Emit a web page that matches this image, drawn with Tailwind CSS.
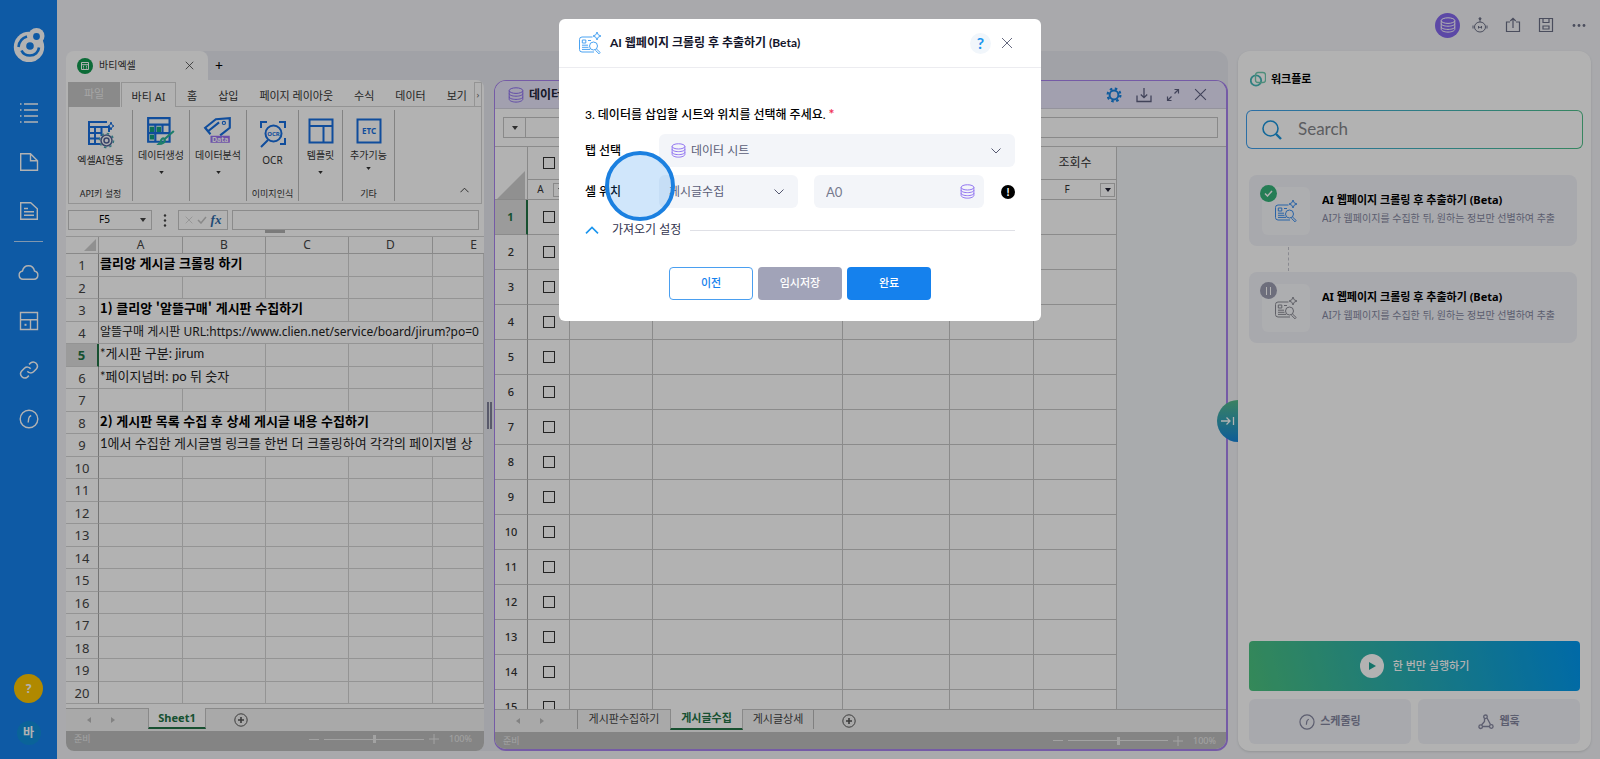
<!DOCTYPE html>
<html lang="ko">
<head>
    <meta charset="UTF-8">
    <meta name="viewport" content="width=device-width, initial-scale=1.0">
    <title>AI 웹페이지 크롤링</title>
    <script src="https://cdn.jsdelivr.net/npm/@tailwindcss/browser@4"></script>
</head>
<body class="h-screen overflow-hidden flex bg-[#f2f3f7] text-xs text-[#333] font-['Noto_Sans','Noto_Sans_CJK_KR',sans-serif]">

    <!-- shared icons -->
    <svg class="hidden">
        <symbol id="db" viewBox="0 0 16 16" fill="none" stroke="currentColor">
            <ellipse cx="8" cy="3.6" rx="6.8" ry="2.8"/>
            <path d="M1.200 3.600v8.600c0 1.500 3 2.900 6.800 2.900s6.800-1.400 6.800-2.900V3.600M1.200 6.600c0 1.500 3 2.600 6.800 2.600s6.800-1.100 6.800-2.600M1.200 9.800c0 1.500 3 2.600 6.800 2.600s6.800-1.100 6.800-2.600"/>
        </symbol>
        <symbol id="crawl" viewBox="0 0 24 24" fill="none" stroke="currentColor">
            <path d="M14.500 6H4a2.500 2.500 0 0 0-2.500 2.500v10A2.500 2.500 0 0 0 4 21h12M4.300 9h3.500v3H4.300zM10 9.500h3M4 14.200h6M4 16.300h6.500M4 18.400h8M19 1l1.200 2.800L23 5l-2.800 1.200L19 9l-1.200-2.800L15 5l2.800-1.200zM18.500 18l3.700 3.500-1.200 1.300-3.700-3.600"/>
            <circle cx="15.500" cy="15" r="4"/>
        </symbol>
        <symbol id="clock" viewBox="0 0 20 20" fill="none" stroke="currentColor">
            <circle cx="10" cy="10" r="8.800"/>
            <path d="M12.200 6.500c-1.500.7-2.300 1.700-2.500 3l-.5 4"/>
        </symbol>
        <symbol id="down" viewBox="0 0 10 6" fill="none" stroke="currentColor">
            <path d="M.5.5 5 5 9.500.5"/>
        </symbol>
        <symbol id="caret" viewBox="0 0 6 4">
            <path d="M0 0h6L3 4z" fill="currentColor"/>
        </symbol>
        <symbol id="close" viewBox="0 0 12 12" fill="none" stroke="currentColor">
            <path d="m1 1 10 10M11 1 1 11"/>
        </symbol>
        <symbol id="plus" viewBox="0 0 14 14" fill="none" stroke="currentColor">
            <circle cx="7" cy="7" r="6.200"/><path d="M7 4v6M4 7h6" stroke-width="1.600"/>
        </symbol>
    </svg>

    <!-- side menu -->
    <nav class="w-[57px] shrink-0 bg-[#1581ed] text-white flex flex-col items-center pt-7">
        <a href="#" aria-label="홈">
            <svg class="w-8 h-[34px]" viewBox="0 0 32 34" fill="none">
                <circle cx="16" cy="19" r="15.200" fill="currentColor"/>
                <circle cx="23.500" cy="8" r="8" fill="currentColor"/>
                <circle cx="23.500" cy="8.500" r="3.400" fill="#1581ed"/>
                <circle cx="17" cy="18" r="3.800" fill="#1581ed"/>
                <path d="M5.500 19c.5-5 3.500-9 8.500-10.500" stroke="#1581ed" stroke-width="2.600"/>
                <path d="M8.500 22.500c1.500 3.500 4.500 5 8.500 5 5 0 8.500-3.500 9-8" stroke="#1581ed" stroke-width="2.600"/>
            </svg>
        </a>
        <div class="flex flex-col items-center gap-[29px] mt-[41px]">
            <a href="#" aria-label="목록"><svg class="w-5 h-5" viewBox="0 0 20 20" stroke="currentColor" stroke-width="1.400"><path d="M5 1h14M5 7h14M5 13h14M5 19h14M1 1h1.500M1 7h1.500M1 13h1.500M1 19h1.500"/></svg></a>
            <a href="#" aria-label="페이지"><svg class="w-5 h-5" viewBox="0 0 20 20" fill="none" stroke="currentColor" stroke-width="1.400"><path d="M1.700 1.700h9.800l7 7v9.600H1.700zM11.500 1.700v7h7"/></svg></a>
            <a href="#" aria-label="문서"><svg class="w-5 h-5" viewBox="0 0 20 20" fill="none" stroke="currentColor" stroke-width="1.400"><path d="M1.700 1.700h10l6.600 6v10.600H1.700zM5 7.500h4M5 10.800h10M5 14.200h10"/></svg></a>
        </div>
        <div class="w-[29px] h-px bg-white/70 my-5"></div>
        <div class="flex flex-col items-center gap-[29px]">
            <a href="#" aria-label="클라우드"><svg class="w-[21px] h-5" viewBox="0 0 21 20" fill="none" stroke="currentColor" stroke-width="1.400"><path d="M5 17.300a4.200 4.200 0 0 1-.5-8.300c.7-3.500 3-5.300 6-5.300s5.300 1.800 6 5.300a4.200 4.200 0 0 1-.5 8.300z"/></svg></a>
            <a href="#" aria-label="템플릿"><svg class="w-5 h-5" viewBox="0 0 20 20" fill="none" stroke="currentColor" stroke-width="1.400"><path d="M1.500 1.500h17v17h-17zM1.500 8.800h17M11.500 8.800v9.700"/><path d="M5.500 13.800h2" stroke-width="2"/></svg></a>
            <a href="#" aria-label="링크"><svg class="w-5 h-5" viewBox="0 0 24 24" fill="none" stroke="currentColor" stroke-width="1.800"><path d="M10 13.500a5 5 0 0 0 7.500.5l3.500-3.500a5 5 0 0 0-7-7L12 5.200M14 10.500a5 5 0 0 0-7.500-.5L3 13.500a5 5 0 0 0 7 7l1.800-1.700"/></svg></a>
            <a href="#" aria-label="예약"><svg class="w-5 h-5" stroke-width="1.400"><use href="#clock"/></svg></a>
        </div>
        <button class="mt-auto w-[29px] h-[29px] rounded-full bg-[#fcc500] font-bold">?</button>
        <button class="mt-[18px] mb-[14px] w-6 h-6 rounded-full bg-[#0f8fdc] font-bold">바</button>
    </nav>

    <div class="flex-1 min-w-0 flex flex-col px-[9px] pb-2">
        <header class="h-[50px] mb-px shrink-0 flex items-center justify-end gap-3 pr-1 text-[#6b6f86]">
            <button aria-label="데이터 시트" class="w-[25px] h-[25px] rounded-full bg-[#8567ee] text-white flex items-center justify-center"><svg class="w-4 h-4"><use href="#db"/></svg></button>
            <button aria-label="로봇"><svg class="w-4 h-4" viewBox="0 0 16 16" fill="none" stroke="currentColor"><ellipse cx="8" cy="10" rx="5.500" ry="5"/><path d="M8 5V2M6.500 9v2.500M9.500 9v2.500M1 8.500v3M15 8.500v3M6.500 10.300h3"/><circle cx="8" cy="1.700" r="1" fill="currentColor"/></svg></button>
            <button aria-label="내보내기" class="ml-[5px]"><svg class="w-4 h-4" viewBox="0 0 16 16" fill="none" stroke="currentColor" stroke-width="1.200"><path d="M5 5H1.500v9.500h13V5H11M8 11V1.500M5.300 4 8 1.300 10.700 4"/></svg></button>
            <button aria-label="저장" class="ml-[5px]"><svg class="w-4 h-4" viewBox="0 0 16 16" fill="none" stroke="currentColor" stroke-width="1.200"><path d="M1.500 1.500h13v13h-13zM5 1.500v4h6v-4M5 9h6v3H5z"/></svg></button>
            <button aria-label="더보기" class="ml-[5px]"><svg class="w-4 h-4" viewBox="0 0 16 16" fill="currentColor"><circle cx="3" cy="8.500" r="1.400"/><circle cx="8" cy="8.500" r="1.400"/><circle cx="13" cy="8.500" r="1.400"/></svg></button>
        </header>

        <div class="flex-1 min-h-0 flex gap-[10px]">
            <!-- work area -->
            <div class="flex-1 min-w-0 flex rounded-xl bg-[#e7e9f0]">

                <!-- excel -->
                <section class="w-[418px] shrink-0 min-h-0 flex flex-col">
                    <div class="h-[29px] shrink-0 flex items-center">
                        <div class="w-[142px] h-full bg-white rounded-t-lg flex items-center pl-[11px] pr-[14px] text-[10px]">
                            <svg class="w-4 h-4" viewBox="0 0 16 16"><circle cx="8" cy="8" r="8" fill="#129a50"/><path d="M4.500 4.500h7v7h-7zM4.500 6.700h7M6 8.300h1M9 8.300h1M6 10h1M9 10h1" stroke="#fff" fill="none"/></svg>
                            <span class="ml-[6px]">바티엑셀</span>
                            <button aria-label="탭 닫기" class="ml-auto"><svg class="w-[9px] h-[9px]"><use href="#close"/></svg></button>
                        </div>
                        <button class="ml-[7px] text-sm text-black">+</button>
                    </div>

                    <div class="flex-1 min-h-0 bg-white rounded-tr-lg rounded-b-lg overflow-hidden flex flex-col pt-[2px]">
                        <div class="h-[25px] shrink-0 flex items-stretch mx-[2px] text-[11px]">
                            <button class="w-[52px] bg-[#c6c6c6] text-white/70">파일</button>
                            <button class="w-[55px] ml-px border border-b-0 border-[#d4d4d4] pt-1">바티 AI</button>
                            <div class="flex-1 flex items-center justify-between pt-1 pl-[11px] pr-[7px] border-b border-[#d4d4d4]">
                                <button>홈</button>
                                <button>삽입</button>
                                <button>페이지 레이아웃</button>
                                <button>수식</button>
                                <button>데이터</button>
                                <button>보기</button>
                            </div>
                            <button class="w-[8px] border border-[#d4d4d4] text-[9px] text-[#666]">›</button>
                        </div>

                        <div class="h-[97px] shrink-0 mx-[2px] pt-[3px] pb-[2px] flex border border-t-0 border-[#d4d4d4] text-[10px] leading-[15px] text-center">
                            <button class="w-[64px] flex flex-col items-center border-r border-[#bcbcbc]">
                                <svg class="w-[28px] h-[30px] mt-[9px]" viewBox="0 0 28 30" fill="none" stroke="#176fe0" stroke-width="2"><path d="M20 3H2v22h11M2 8h20v5M2 14h13M2 19.500h11M8 8v17M14.500 8v9"/><path d="m24 3 1 3 2 1-2 1-1 3-1-3-2-1 2-1z" stroke-width="1"/><g stroke="#54649a" stroke-width="1.500"><circle cx="19.500" cy="21.500" r="2.500"/><circle cx="19.500" cy="21.500" r="5.500"/><circle cx="19.500" cy="21.500" r="7" stroke="#4aa5b0" stroke-dasharray="2.500 3"/></g></svg>
                                <span class="mt-1">엑셀AI연동</span>
                                <span class="mt-auto text-[9px]">API키 설정</span>
                            </button>
                            <button class="w-[57px] flex flex-col items-center border-r border-[#bcbcbc]">
                                <svg class="w-[30px] h-[30px] mt-[6px]" viewBox="0 0 28 28" fill="none" stroke="#176fe0" stroke-width="2"><path d="M2 2h20v22H2zM2 8h20M3 16h18M8.700 8v16M15.400 8v9"/><path d="M3.500 10h4v5h-4zM10 10h4v5h-4zM3.500 17.500h4V22h-4z" fill="#12a27e" stroke="none"/><path d="M26 14 18 21M12 26c3 0 6-1 5.500-4.500-2-1.500-4 .5-3.500 2.500z" stroke="#2bb59a"/></svg>
                                <span class="mt-[2px]">데이터생성</span><svg class="w-[5px] h-[3px] mt-2"><use href="#caret"/></svg>
                            </button>
                            <button class="w-[57px] flex flex-col items-center border-r border-[#bcbcbc]">
                                <svg class="w-[30px] h-[30px] mt-[6px]" viewBox="0 0 28 28" fill="none" stroke="#176fe0" stroke-width="2"><path d="M7 17 2 11 12 3l13-1v9l-9 7M5 14l10-8"/><circle cx="19.500" cy="6.500" r="1.500" stroke-width="1"/><path d="M7 18.500h18V25H7z" fill="#9b72f2" stroke="none"/><text x="16" y="24" font-size="6.500" font-weight="700" text-anchor="middle" fill="#fff" stroke="none">Data</text></svg>
                                <span class="mt-[2px]">데이터분석</span><svg class="w-[5px] h-[3px] mt-2"><use href="#caret"/></svg>
                            </button>
                            <button class="w-[52px] flex flex-col items-center border-r border-[#bcbcbc]">
                                <svg class="w-[28px] h-[30px] mt-[9px]" viewBox="0 0 28 30" fill="none" stroke="#176fe0" stroke-width="2"><path d="M2 9V3h6M20 3h6v6M26 19v6h-5M9 21l-7 7"/><circle cx="14.500" cy="14.500" r="8"/><text x="14.500" y="17" font-size="6" font-weight="700" text-anchor="middle" fill="#176fe0" stroke="none">OCR</text></svg>
                                <span class="mt-1">OCR</span>
                                <span class="mt-auto text-[9px]">이미지인식</span>
                            </button>
                            <button class="w-[44px] flex flex-col items-center border-r border-[#bcbcbc]">
                                <svg class="w-[28px] h-[30px] mt-[6px]" viewBox="0 0 28 28" fill="none" stroke="#176fe0" stroke-width="2"><path d="M2.500 2.500h23v23h-23zM2.500 9h23M16.500 9v16.500"/></svg>
                                <span class="mt-[2px]">템플릿</span><svg class="w-[5px] h-[3px] mt-2"><use href="#caret"/></svg>
                            </button>
                            <button class="w-[52px] flex flex-col items-center border-r border-[#bcbcbc]">
                                <svg class="w-[28px] h-[30px] mt-[6px]" viewBox="0 0 28 28" fill="none" stroke="#176fe0" stroke-width="2"><path d="M2.500 2.500h23v23h-23z"/><text x="14" y="17" font-size="8" font-weight="700" text-anchor="middle" fill="#176fe0" stroke="none">ETC</text></svg>
                                <span class="mt-[2px]">추가기능</span><svg class="w-[5px] h-[3px] mt-1"><use href="#caret"/></svg>
                                <span class="mt-auto text-[9px]">기타</span>
                            </button>
                            <button aria-label="리본 접기" class="ml-auto mr-3 self-end mb-2"><svg class="w-[9px] h-[6px] rotate-180"><use href="#down"/></svg></button>
                        </div>

                        <div class="h-[33px] shrink-0 px-[2px] pt-[6px] flex items-start border-b border-[#d4d4d4] relative">
                            <div class="w-[84px] h-5 border border-[#c8c8c8] flex items-center pr-[5px] text-[10px] text-black">
                                <span class="flex-1 text-center">F5</span><svg class="w-[6px] h-1 text-[#444]"><use href="#caret"/></svg>
                            </div>
                            <svg class="w-[26px] h-5" viewBox="0 0 26 20" fill="#444"><circle cx="13" cy="5.500" r="1.200"/><circle cx="13" cy="10.500" r="1.200"/><circle cx="13" cy="15.500" r="1.200"/></svg>
                            <div class="w-[50px] h-5 border border-[#c8c8c8] flex items-center justify-center gap-1 text-[#c4c4c4]">
                                <svg class="w-2 h-2"><use href="#close"/></svg>
                                <svg class="w-[10px] h-2" viewBox="0 0 10 8" fill="none" stroke="currentColor" stroke-width="1.500"><path d="m1 4 3 3 5-6"/></svg>
                                <i class="font-['Liberation_Serif',serif] text-[13px] font-bold text-[#2f6aa8]">fx</i>
                            </div>
                            <input aria-label="수식" class="ml-1 flex-1 min-w-0 h-5 border border-[#c8c8c8] mr-[3px]">
                            <span class="absolute left-[199px] bottom-[3px] w-5 h-[3px] bg-[#b0b0b0]"></span>
                        </div>

                        <div class="flex-1 min-h-0 overflow-hidden">
                            <table class="w-full table-fixed border-separate border-spacing-0 text-[13px] text-[#222]">
                                <thead>
                                    <tr class="h-[17px] leading-[16px] text-xs text-[#444]">
                                        <th class="w-[33px] p-0 border-r border-b border-[#c4c4c4]"><svg class="w-3 h-3 ml-auto mr-[2px]" viewBox="0 0 12 12"><path d="M12 0v12H0z" fill="#cfcfcf"/></svg></th>
                                        <th class="w-[84px] p-0 font-normal border-r border-b border-[#c4c4c4]">A</th>
                                        <th class="w-[83px] p-0 font-normal border-r border-b border-[#c4c4c4]">B</th>
                                        <th class="w-[83px] p-0 font-normal border-r border-b border-[#c4c4c4]">C</th>
                                        <th class="w-[84px] p-0 font-normal border-r border-b border-[#c4c4c4]">D</th>
                                        <th class="p-0 pl-[30px] font-normal border-b border-[#c4c4c4]">E</th>
                                    </tr>
                                </thead>
                                <tbody id="excel-rows"></tbody>
                            </table>
                        </div>

                        <div class="h-[23px] shrink-0 flex items-center bg-[#f3f3f3] border-t border-[#c4c4c4] text-[#bbb]">
                            <svg class="w-[6px] h-1 ml-5 rotate-90"><use href="#caret"/></svg>
                            <svg class="w-[6px] h-1 ml-[18px] -rotate-90"><use href="#caret"/></svg>
                            <button class="ml-[32px] self-start -mt-px w-[58px] h-[21px] bg-white border-x border-b-2 border-x-[#c4c4c4] border-b-[#217346] font-bold text-[#217346] text-[11px] leading-[18px]">Sheet1</button>
                            <button aria-label="시트 추가" class="ml-7 text-[#555]"><svg class="w-[14px] h-[14px]"><use href="#plus"/></svg></button>
                        </div>
                        <footer class="h-5 shrink-0 flex items-center bg-[#bebebe] pl-2 pr-3 pb-1 text-[9px] text-[#e9e9e9]">
                            <span class="mr-auto">준비</span>
                            <span class="w-[10px] h-px bg-[#e9e9e9]"></span>
                            <div class="w-[100px] h-px mx-[5px] bg-[#e9e9e9] flex items-center justify-center"><span class="w-[3px] h-2 bg-[#e9e9e9]"></span></div>
                            <svg class="w-[10px] h-[10px] mr-[10px]" viewBox="0 0 10 10" stroke="currentColor"><path d="M5 0v10M0 5h10"/></svg>
                            <span>100%</span>
                        </footer>
                    </div>
                </section>

                <!-- splitter -->
                <div class="w-[10px] shrink-0 pt-[29px] flex items-center justify-center gap-px">
                    <span class="w-[2px] h-[27px] bg-[#80829a]"></span><span class="w-[2px] h-[27px] bg-[#80829a]"></span>
                </div>

                <!-- data sheet -->
                <section class="flex-1 min-w-0 flex flex-col pt-[29px]">
                    <div class="flex-1 min-h-0 flex flex-col bg-[#f3f5f8] border border-r-2 border-b-2 border-[#a883ee] rounded-xl overflow-hidden">
                        <div class="h-7 shrink-0 flex items-center bg-[#e8e5fb] pl-[13px] pr-[19px] border-b border-[#d5d3e0] text-[#5d6080]">
                            <svg class="w-[16px] h-[16px] text-[#8d6ff0]"><use href="#db"/></svg>
                            <h2 class="ml-[5px] font-bold text-[#222438]">데이터 시트</h2>
                            <div class="ml-auto flex items-center gap-[14px]">
                                <button aria-label="설정"><svg class="w-4 h-4" viewBox="0 0 16 16" fill="none" stroke="#1683e0"><circle cx="8" cy="8" r="4.400" stroke-width="2"/><circle cx="8" cy="8" r="6.400" stroke-width="2.200" stroke-dasharray="2.500 2.530"/></svg></button>
                                <button aria-label="다운로드"><svg class="w-4 h-4" viewBox="0 0 16 16" fill="none" stroke="currentColor" stroke-width="1.300"><path d="M1 8.500v6h14v-6M8 1v9.500M4.800 7.500 8 10.700l3.200-3.200"/></svg></button>
                                <button aria-label="확대"><svg class="w-[14px] h-[14px]" viewBox="0 0 14 14" fill="none" stroke="currentColor" stroke-width="1.200"><path d="M8.500 1.500h4v4M12.500 1.500 8.500 5.500M5.500 12.500h-4v-4M1.500 12.500l4-4"/></svg></button>
                                <button aria-label="닫기"><svg class="w-[13px] h-[13px]"><use href="#close"/></svg></button>
                            </div>
                        </div>
                        <div class="h-[38px] shrink-0 flex items-center bg-white px-2 border-b border-[#c8c8c8]">
                            <button class="w-[23px] h-[21px] flex items-center justify-center border border-[#c4c4c4] text-[#444]"><svg class="w-[6px] h-1"><use href="#caret"/></svg></button>
                            <input aria-label="셀 값" class="flex-1 h-[21px] border border-l-0 border-[#c4c4c4]">
                        </div>
                        <div class="flex-1 min-h-0 overflow-hidden">
                            <table class="w-[622px] table-fixed border-separate border-spacing-0 bg-white text-[11px] text-center">
                                <colgroup><col class="w-[33px]"><col class="w-[42px]"><col class="w-[83px]"><col class="w-[190px]"><col class="w-[107px]"><col class="w-[84px]"><col class="w-[83px]"></colgroup>
                                <thead>
                                    <tr class="h-[33px]">
                                        <th rowspan="2" class="p-0 align-bottom border-r border-b border-[#c4c4c4]"><svg class="w-7 h-7 ml-auto mr-[2px]" viewBox="0 0 28 28"><path d="M28 0v28H0z" fill="#cfcfcf"/></svg></th>
                                        <th class="p-0 border-b border-[#c4c4c4]"><input type="checkbox" aria-label="전체 선택" class="block mx-auto w-3 h-3 appearance-none border border-[#333]"></th>
                                        <th class="p-0 border-b border-[#c4c4c4]"></th>
                                        <th class="p-0 border-b border-[#c4c4c4]"></th>
                                        <th class="p-0 border-b border-[#c4c4c4]"></th>
                                        <th class="p-0 border-b border-[#c4c4c4]"></th>
                                        <th class="p-0 font-normal text-xs border-b border-r border-[#c4c4c4]">조회수</th>
                                    </tr>
                                    <tr class="h-5 text-[10px]">
                                        <th class="p-0 border-b border-[#c4c4c4]"><div class="flex items-center font-normal"><span class="flex-1">A</span><button class="w-[15px] h-[14px] flex items-center justify-center border border-[#c4c4c4] mr-[2px]"><svg class="w-[6px] h-1"><use href="#caret"/></svg></button></div></th>
                                        <th class="p-0 border-b border-[#c4c4c4]"></th>
                                        <th class="p-0 border-b border-[#c4c4c4]"></th>
                                        <th class="p-0 border-b border-[#c4c4c4]"></th>
                                        <th class="p-0 border-b border-[#c4c4c4]"></th>
                                        <th class="p-0 border-b border-r border-[#c4c4c4]"><div class="flex items-center font-normal"><span class="flex-1">F</span><button class="w-[15px] h-[14px] flex items-center justify-center border border-[#c4c4c4] text-[#223] mr-px"><svg class="w-[6px] h-1"><use href="#caret"/></svg></button></div></th>
                                    </tr>
                                </thead>
                                <tbody id="data-rows"></tbody>
                            </table>
                        </div>
                        <div class="h-[23px] shrink-0 flex items-center bg-[#f3f3f3] border-t border-[#c4c4c4] text-[11px] text-[#bbb]">
                            <svg class="w-[6px] h-1 ml-5 rotate-90"><use href="#caret"/></svg>
                            <svg class="w-[6px] h-1 ml-[18px] -rotate-90"><use href="#caret"/></svg>
                            <button class="ml-[32px] self-start w-[93px] h-[19px] border-l border-[#b8b8b8] text-[#444]">게시판수집하기</button>
                            <button class="self-start -mt-px w-[73px] h-[21px] bg-white border-x border-b-2 border-x-[#c4c4c4] border-b-[#217346] font-bold text-[#217346]">게시글수집</button>
                            <button class="self-start w-[71px] h-[19px] border-r border-[#b8b8b8] text-[#444]">게시글상세</button>
                            <button aria-label="시트 추가" class="ml-7 text-[#555]"><svg class="w-[14px] h-[14px]"><use href="#plus"/></svg></button>
                        </div>
                        <footer class="h-[17px] shrink-0 flex items-center bg-[#bebebe] pl-2 pr-[10px] text-[9px] text-[#e9e9e9]">
                            <span class="mr-auto">준비</span>
                            <span class="w-[10px] h-px bg-[#e9e9e9]"></span>
                            <div class="w-[100px] h-px mx-[5px] bg-[#e9e9e9] flex items-center justify-center"><span class="w-[3px] h-2 bg-[#e9e9e9]"></span></div>
                            <svg class="w-[10px] h-[10px] mr-[10px]" viewBox="0 0 10 10" stroke="currentColor"><path d="M5 0v10M0 5h10"/></svg>
                            <span>100%</span>
                        </footer>
                    </div>
                </section>
            </div>

            <!-- workflow -->
            <aside class="relative w-[353px] shrink-0 bg-white rounded-xl shadow-sm flex flex-col pt-[17px] px-2 pb-[7px]">
                <button aria-label="패널 접기" class="absolute right-full top-[349px] w-[21px] h-[42px] rounded-l-full bg-linear-to-b from-[#55b98a] to-[#1683d8] text-white flex items-center justify-center">
                    <svg class="w-[14px] h-[10px]" viewBox="0 0 14 10" fill="none" stroke="currentColor" stroke-width="1.300"><path d="M0 5h9M5.500 1.500 9 5 5.500 8.500M12.500 1v8"/></svg>
                </button>
                <h2 class="flex items-center gap-[5px] pl-1 h-[22px] text-[11px] font-bold text-black">
                    <svg class="w-4 h-4" viewBox="0 0 16 16" fill="none" stroke="#45b8b8" stroke-width="1.300"><circle cx="6" cy="9.500" r="5.200" stroke-width="1.800"/><rect x="5.500" y="1.500" width="10" height="10" rx="2.500" stroke="#6fcbb0"/></svg>
                    워크플로
                </h2>
                <label class="mt-5 rounded-md p-px bg-linear-to-r from-[#3f9fee] to-[#4fc08a]">
                    <span class="h-[37px] rounded-[5px] bg-white flex items-center pl-[15px]">
                        <svg class="w-5 h-5 shrink-0" viewBox="0 0 20 20" fill="none" stroke="#1b95dc" stroke-width="1.600"><circle cx="8.500" cy="8.500" r="7.500"/><path d="m14 14 5 5" stroke-width="2.400"/></svg>
                        <input type="text" placeholder="Search" aria-label="Search" class="flex-1 min-w-0 ml-4 text-[17px] outline-none placeholder:text-[#85868a] font-['Lato',sans-serif]">
                    </span>
                </label>

                <div class="mt-[26px] ml-[3px] mr-[6px]">
                    <article class="h-[71px] rounded-lg bg-[#f1f2f8] flex items-start pt-3 pl-[13px] pr-[18px]">
                        <div class="relative w-12 h-12 shrink-0 rounded-md bg-[#f8f9fc] flex items-center justify-center text-[#3b8ff0]">
                            <svg class="w-6 h-6"><use href="#crawl"/></svg>
                            <span class="absolute -left-[2px] -top-[2px] w-[17px] h-[17px] rounded-full bg-[#36b37a] flex items-center justify-center"><svg class="w-[9px] h-[7px]" viewBox="0 0 9 7" fill="none" stroke="#fff" stroke-width="1.500"><path d="m1 3.500 2.500 2.500L8 1"/></svg></span>
                        </div>
                        <div class="ml-3 min-w-0 overflow-hidden whitespace-nowrap">
                            <h3 class="pt-[3px] text-[11px] leading-[19px] font-bold text-black">AI 웹페이지 크롤링 후 추출하기 (Beta)</h3>
                            <p class="text-[10px] leading-[19px] text-[#8587a0]">AI가 웹페이지를 수집한 뒤, 원하는 정보만 선별하여 추출</p>
                        </div>
                    </article>
                    <div class="h-[26px] ml-[39px] py-px"><div class="h-full border-l border-dashed border-[#c4c5ce]"></div></div>
                    <article class="h-[71px] rounded-lg bg-[#f1f2f8] flex items-start pt-3 pl-[13px] pr-[18px]">
                        <div class="relative w-12 h-12 shrink-0 rounded-md bg-[#f8f9fc] flex items-center justify-center text-[#8b8c95]">
                            <svg class="w-6 h-6"><use href="#crawl"/></svg>
                            <span class="absolute -left-[2px] -top-[2px] w-[17px] h-[17px] rounded-full bg-[#9c9eb2] flex items-center justify-center gap-[3px]"><span class="w-px h-2 bg-white"></span><span class="w-px h-2 bg-white"></span></span>
                        </div>
                        <div class="ml-3 min-w-0 overflow-hidden whitespace-nowrap">
                            <h3 class="pt-[3px] text-[11px] leading-[19px] font-bold text-black">AI 웹페이지 크롤링 후 추출하기 (Beta)</h3>
                            <p class="text-[10px] leading-[19px] text-[#8587a0]">AI가 웹페이지를 수집한 뒤, 원하는 정보만 선별하여 추출</p>
                        </div>
                    </article>
                </div>

                <div class="mt-auto mx-[3px] grid grid-cols-2 gap-x-[7px] gap-y-2 text-[11px]">
                    <button class="col-span-2 h-[50px] rounded-sm bg-linear-[75deg] from-[#4cc47f] to-[#0098f0] text-white font-medium flex items-center justify-center gap-[9px]">
                        <svg class="w-6 h-6" viewBox="0 0 24 24"><circle cx="12" cy="12" r="12" fill="#fff"/><path d="m9 8 7 4-7 4z" fill="#1da597"/></svg>
                        한 번만 실행하기
                    </button>
                    <button class="h-[45px] rounded-md bg-[#f1f2f8] text-[#8587a0] font-bold flex items-center justify-center gap-[5px]">
                        <svg class="w-4 h-4" stroke-width="1.500"><use href="#clock"/></svg>스케줄링
                    </button>
                    <button class="h-[45px] rounded-md bg-[#f1f2f8] text-[#8587a0] font-bold flex items-center justify-center gap-[5px]">
                        <svg class="w-4 h-4" viewBox="0 0 16 16" fill="none" stroke="currentColor" stroke-width="1.300"><path d="M6.500 4.500v3L3.500 11M9 4l3.500 6.500M5 12.500h6.500"/><circle cx="7.500" cy="2.800" r="1.800"/><circle cx="2.700" cy="12.700" r="1.800"/><circle cx="13.300" cy="12.500" r="1.800"/></svg>웹훅
                    </button>
                </div>
            </aside>
        </div>
    </div>

    <!-- dialog -->
    <div class="fixed inset-0 bg-black/30 flex justify-center items-start pt-[19px]">
        <div role="dialog" class="relative w-[482px] bg-white rounded-md text-[#14152b] font-['Lato','Noto_Sans_CJK_KR',sans-serif]">
            <header class="h-[49px] flex items-center px-[19px] border-b border-[#ececf0]">
                <svg class="w-6 h-6 text-[#4aa3f2]"><use href="#crawl"/></svg>
                <h1 class="ml-2 font-bold">AI 웹페이지 크롤링 후 추출하기 (Beta)</h1>
                <button class="ml-auto w-[21px] h-[21px] rounded-full bg-[#f1f6fb] text-[#1b95ee] text-base leading-none font-bold">?</button>
                <button aria-label="닫기" class="ml-[10px] mr-[9px] text-[#666a80]"><svg class="w-3 h-3"><use href="#close"/></svg></button>
            </header>

            <form class="px-[26px] pt-9 pb-[21px]">
                <p class="h-[22px] leading-[22px] font-medium text-black">3. 데이터를 삽입할 시트와 위치를 선택해 주세요. <span class="text-sm text-[#f0325a] font-bold">*</span></p>
                <div class="mt-2 h-[33px] flex items-center">
                    <label for="tab" class="w-[74px] font-medium text-black">탭 선택</label>
                    <div class="relative flex-1 h-full">
                        <select id="tab" class="w-full h-full appearance-none rounded-md bg-[#f3f5f9] pl-8 text-[#5b5e78]"><option>데이터 시트</option></select>
                        <svg class="absolute left-3 top-[9px] w-[15px] h-[15px] text-[#8d6ff0]"><use href="#db"/></svg>
                        <svg class="absolute right-[14px] top-[14px] w-[10px] h-[6px] text-[#555870]"><use href="#down"/></svg>
                    </div>
                </div>
                <div class="mt-2 h-[33px] flex items-center">
                    <label for="sheet" class="w-[74px] font-medium text-black">셀 위치</label>
                    <div class="relative w-[139px] h-full">
                        <select id="sheet" class="w-full h-full appearance-none rounded-md bg-[#f3f5f9] pl-[10px] text-[#5b5e78]"><option>게시글수집</option></select>
                        <svg class="absolute right-[14px] top-[14px] w-[10px] h-[6px] text-[#555870]"><use href="#down"/></svg>
                    </div>
                    <div class="relative ml-4 w-[170px] h-full">
                        <input type="text" value="A0" aria-label="셀" class="w-full h-full rounded-md bg-[#f3f5f9] pl-3 text-[13px] text-[#777a8e]">
                        <svg class="absolute right-[9px] top-[9px] w-[15px] h-[15px] text-[#8d6ff0]"><use href="#db"/></svg>
                    </div>
                    <span class="ml-auto w-[14px] h-[14px] rounded-full bg-black text-white text-[11px] leading-[14px] font-bold text-center">!</span>
                </div>
                <div class="mt-[11px] h-[22px] flex items-center text-[#333550]">
                    <svg class="w-[14px] h-2 text-[#1b95ee] rotate-180" stroke-width="1.200"><use href="#down"/></svg>
                    <span class="ml-[13px] mr-[9px]">가져오기 설정</span>
                    <span class="flex-1 h-px bg-[#dfe0e6]"></span>
                </div>
                <div class="mt-[26px] flex justify-center gap-[5px] text-[11px] font-medium">
                    <button type="button" class="w-[84px] h-[33px] rounded-sm border border-[#4a9ff0] text-[#1581ed]">이전</button>
                    <button type="button" class="w-[84px] h-[33px] rounded-sm bg-[#a1a3b8] text-white">임시저장</button>
                    <button type="button" class="w-[84px] h-[33px] rounded-sm bg-[#1581ed] text-white">완료</button>
                </div>
            </form>

            <!-- click marker -->
            <span class="absolute left-[46px] top-[132px] w-[70px] h-[70px] rounded-full border-4 border-[#1b80e0] bg-[#1581ed]/20"></span>
        </div>
    </div>

    <script>
        const plain = "font-['Lato','Noto_Sans_CJK_KR',sans-serif]"
        const bold = "font-['Noto_Sans_CJK_KR',sans-serif] font-bold text-black"

        // row number -> [text, how many columns it runs over, classes]
        const texts = {
            1: ["클리앙 게시글 크롤링 하기", 2, bold],
            3: ["1) 클리앙 '알뜰구매' 게시판 수집하기", 3, bold],
            4: ["알뜰구매 게시판 URL:https://www.clien.net/service/board/jirum?po=0", 5, "text-xs leading-[20px]"],
            5: ["*게시판 구분: jirum", 2, plain],
            6: ["*페이지넘버: po 뒤 숫자", 2, plain],
            8: ["2) 게시판 목록 수집 후 상세 게시글 내용 수집하기", 4, bold],
            9: ["1에서 수집한 게시글별 링크를 한번 더 크롤링하여 각각의 페이지별 상", 5, plain]
        }

        let excel = ""
        for (let i = 1; i <= 20; i++) {
            const head = i === 5
                ? "p-0 bg-[#dedede] font-bold text-[#217346] border-r-2 border-r-[#217346] border-b border-b-[#d4d4d4]"
                : "p-0 font-normal text-[#444] border-r border-r-[#a8a8a8] border-b border-b-[#d4d4d4]"
            excel += `<tr class="odd:h-[23px] even:h-[22px] leading-[18px]"><th class="${head}">${i}</th>`
            let used = 0
            if (texts[i]) {
                excel += `<td colspan="${texts[i][1]}" class="p-0 pl-px align-top whitespace-nowrap overflow-hidden border-r border-b border-[#d4d4d4] ${texts[i][2]}">${texts[i][0]}</td>`
                used = texts[i][1]
            }
            for (; used < 5; used++) {
                excel += `<td class="p-0 border-r border-b border-[#d4d4d4]"></td>`
            }
            excel += "</tr>"
        }
        document.getElementById("excel-rows").innerHTML = excel

        let data = ""
        for (let i = 1; i <= 15; i++) {
            const head = i === 1
                ? "p-0 bg-[#dedede] font-bold text-[#217346] border-r-2 border-r-[#217346] border-b border-b-[#c8c8c8]"
                : "p-0 font-medium border-r border-r-[#a8a8a8] border-b border-b-[#c8c8c8]"
            data += `<tr class="h-[35px]"><th class="${head}">${i}</th>
                <td class="p-0 border-r border-b border-[#c8c8c8]"><input type="checkbox" aria-label="${i}행" class="block mx-auto w-3 h-3 appearance-none border border-[#333]"></td>`
            for (let c = 0; c < 5; c++) {
                data += `<td class="p-0 border-r border-b border-[#c8c8c8]"></td>`
            }
            data += "</tr>"
        }
        document.getElementById("data-rows").innerHTML = data
    </script>
</body>
</html>
